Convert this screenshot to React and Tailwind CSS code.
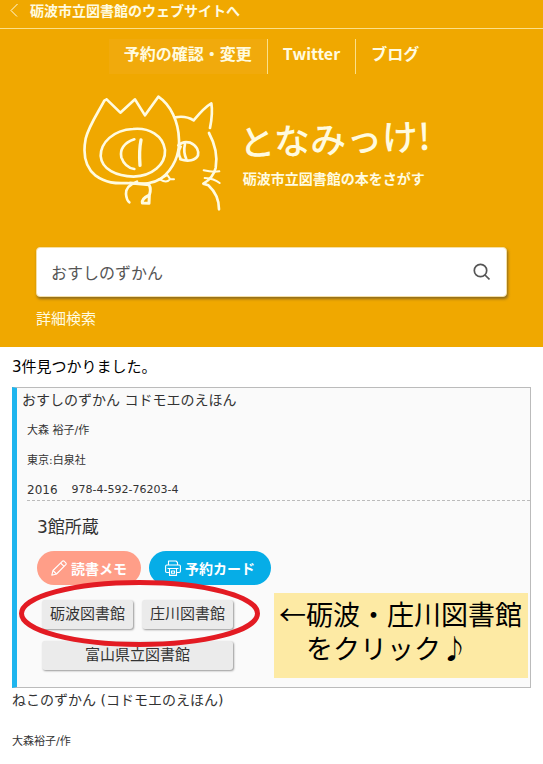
import { useState } from "react";

const navLinks = ["予約の確認・変更", "Twitter", "ブログ"];

function BackIcon() {
  return (
    <svg className="h-[14px] w-2" viewBox="0 0 8 14" fill="none" stroke="#fffbe0" aria-hidden="true">
      <path d="M7.500 1 L1 7.500 L7 13.500" />
    </svg>
  );
}

function Mascot() {
  return (
    <svg
      className="h-[120px] w-[142px] shrink-0"
      viewBox="32 30 426 360"
      fill="none"
      stroke="#fffbe0"
      strokeWidth="8"
      strokeLinecap="round"
      strokeLinejoin="round"
      aria-hidden="true"
    >
      {/* ぶた */}
      <path d="M109 46 L102 50 C82 88 56 124 46 164 C36 216 50 254 76 275 C106 297 136 299 170 297 C224 302 250 298 272 284 C312 254 328 208 326 168 C325 112 300 62 264 38 L224 94 L194 46 L150 86 L109 46" />
      <path d="M188 135 C128 138 91 176 91 216 C94 256 138 277 190 278 C246 276 286 242 284 198 C278 154 236 130 188 135 Z" />
      <path d="M192 166 C160 176 148 198 153 220 C160 240 174 252 192 255" />
      <path d="M212 168 C207 192 207 218 209 244" strokeWidth="10" />
      <path d="M200 293 C180 300 166 312 167 330 C168 342 171 350 177 355" />
      <path d="M180 297 L236 302 C242 312 241 322 237 334 L236 358 L216 357 C214 346 222 340 235 334" strokeWidth="9" />
      <path d="M262 288 L291 273 L300 286 L311 286 M270 287 C280 293 291 295 298 287" strokeWidth="6" />
      {/* ねこ */}
      <path d="M315 100 C336 96 352 98 370 109 C384 92 402 70 423 58 C427 82 424 108 419 132" />
      <path d="M324 184 C334 174 348 173 360 176 C380 184 386 202 383 214 C376 229 354 234 330 226" />
      <path d="M344 180 C340 196 342 212 348 226 M331 188 C324 200 324 212 330 222" />
      <path d="M416 147 C434 180 442 218 436 252 C430 276 418 288 399 299 L414 304 C438 326 446 348 446 376" />
      <path d="M400 259 C416 263 432 265 447 262 M403 282 C420 283 436 287 448 297" strokeWidth="6" />
    </svg>
  );
}

function SearchIcon() {
  return (
    <svg className="h-[18px] w-[18px]" viewBox="0 0 18 18" fill="none" stroke="#555" strokeWidth="1.700" aria-hidden="true">
      <circle cx="8.500" cy="7.500" r="6.200" />
      <path d="M13 12 L17.500 16.500" />
    </svg>
  );
}

function PencilIcon() {
  return (
    <svg className="h-4 w-4" viewBox="0 0 16 16" fill="none" stroke="white" strokeWidth="1.100" strokeLinejoin="round" aria-hidden="true">
      <path d="M0.800 15.200 L2 10.500 L11.300 1.300 Q12.300 0.500 13.300 1.300 L14.800 2.800 Q15.600 3.800 14.800 4.700 L5.500 14 Z" />
      <path d="M2 10.500 L5.500 14 M9.600 3 L13 6.400" />
    </svg>
  );
}

function PrinterIcon() {
  return (
    <svg className="h-4 w-4" viewBox="0 0 16 16" fill="none" stroke="white" strokeWidth="1.100" strokeLinejoin="round" aria-hidden="true">
      <path d="M3.500 5 V1 H11 L12.500 2.500 V5" />
      <path d="M4.500 12.500 H1.800 Q0.600 12.500 0.600 11.300 V6.200 Q0.600 5 1.800 5 H14.200 Q15.400 5 15.400 6.200 V11.300 Q15.400 12.500 14.200 12.500 H11.500" />
      <path d="M2.500 8.500 H13.500 M4.500 8.500 V15.400 H11.500 V8.500 M6.500 11 H9.500 V13.300 H6.500 Z" />
    </svg>
  );
}

function LibraryButton({ children, className = "" }) {
  return (
    <button
      type="button"
      className={`h-[29px] rounded-[3px] bg-[#ebebeb] text-[15px] leading-none shadow-[1px_1px_2px_#999] ${className}`}
    >
      {children}
    </button>
  );
}

export default function App() {
  const [query, setQuery] = useState("おすしのずかん");

  return (
    <div className="min-h-screen bg-white font-['DejaVu_Sans','Noto_Sans_CJK_JP',sans-serif] text-[#333]">
      <header className="bg-[#f0a800] pb-4 font-['Noto_Sans_CJK_JP',sans-serif] text-[#fffbe0]">
        <div className="h-[29px] border-b border-[#fbe08a] px-[10px]">
          <a href="#" className="flex items-center gap-3 text-sm font-bold">
            <BackIcon />
            砺波市立図書館のウェブサイトへ
          </a>
        </div>

        <nav className="mt-[10px] flex h-[35px] justify-center">
          {navLinks.map((label) => (
            <a
              key={label}
              href="#"
              className="flex items-center border-r border-[#fbe08a] px-[15px] pb-2 text-base font-bold first:bg-[#f1aa0c] last:border-r-0"
            >
              {label}
            </a>
          ))}
        </nav>

        <div className="mt-5 flex justify-center gap-4 pr-8">
          <Mascot />
          <div className="pt-5">
            <h1 className="-rotate-2 text-4xl leading-[46px] font-medium">となみっけ!</h1>
            <p className="pt-2 pl-1 text-sm font-bold">砺波市立図書館の本をさがす</p>
          </div>
        </div>

        <form className="mt-[33px] px-9" onSubmit={(event) => event.preventDefault()}>
          <div className="flex h-[50px] items-center rounded-[4px] border border-[#f5dfa5] bg-white pr-4 pl-[14px] shadow-[1px_2px_3px_#8a6a20]">
            <input
              type="text"
              aria-label="検索"
              value={query}
              onChange={(event) => setQuery(event.target.value)}
              className="min-w-0 flex-1 bg-transparent text-base text-[#555] outline-none"
            />
            <button type="submit" aria-label="検索する">
              <SearchIcon />
            </button>
          </div>
          <a href="#" className="mt-[9px] mb-px inline-block text-[15px] leading-6">
            詳細検索
          </a>
        </form>
      </header>

      <main className="px-3">
        <p className="pt-[10px] pb-[10px] text-[15px] leading-5 text-black">3件見つかりました。</p>

        <article className="relative border border-l-[5px] border-[#bbb] border-l-[#1eb5ee] bg-[#fafafa] pb-[17px]">
          <h2 className="pl-[5px] text-sm leading-6">おすしのずかん コドモエのえほん</h2>
          <div className="ml-[10px] border-b border-dashed border-[#bbb] text-[11px]">
            <p className="pt-[9px] leading-5">大森 裕子/作</p>
            <p className="pt-[10px] leading-5">東京:白泉社</p>
            <p className="flex items-center gap-[14px] pt-[9px] leading-5">
              <span className="text-xs leading-5">2016</span>
              <span>978-4-592-76203-4</span>
            </p>
          </div>

          <div className="pl-5">
            <p className="pt-[14px] text-[17px] leading-6">3館所蔵</p>
            <div className="mt-3 flex gap-2 font-['Noto_Sans_CJK_JP',sans-serif] text-sm font-bold text-white">
              <button type="button" className="flex h-[34px] items-center gap-1 rounded-full bg-[#ff9e88] px-[14px] pb-px">
                <PencilIcon />
                読書メモ
              </button>
              <button type="button" className="flex h-[34px] items-center gap-1 rounded-full bg-[#06ade7] px-4 pb-px">
                <PrinterIcon />
                予約カード
              </button>
            </div>
            <div className="mt-[15px] ml-[5px] grid w-[191px] grid-cols-2 gap-x-[9px] gap-y-3">
              <LibraryButton>砺波図書館</LibraryButton>
              <LibraryButton>庄川図書館</LibraryButton>
              <LibraryButton className="col-span-2">富山県立図書館</LibraryButton>
            </div>
          </div>

          {/* クリックする場所の案内 */}
          <svg
            className="pointer-events-none absolute bottom-10 left-[2px] h-[67px] w-[241px]"
            viewBox="0 0 241 67"
            fill="none"
            aria-hidden="true"
          >
            <ellipse cx="120.500" cy="33.500" rx="118" ry="31" stroke="#e31b23" strokeWidth="5" />
          </svg>
          <p className="absolute right-[2px] bottom-[9px] h-[85px] w-[254px] bg-[#fdeaa4] pt-1 pl-[5px] font-['Noto_Sans_CJK_JP',sans-serif] text-[27px] leading-[34px] whitespace-nowrap text-black">
            ←砺波・庄川図書館
            <span className="block pl-[27px]">をクリック♪</span>
          </p>
        </article>

        <article>
          <h2 className="text-sm leading-6">ねこのずかん (コドモエのえほん)</h2>
          <p className="pt-5 text-[11px] leading-5">大森裕子/作</p>
        </article>
      </main>
    </div>
  );
}
